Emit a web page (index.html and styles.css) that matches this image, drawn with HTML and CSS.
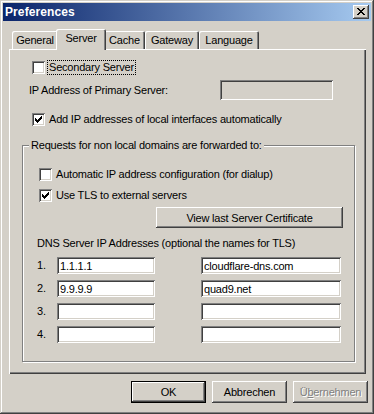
FILE: index.html
```html
<!DOCTYPE html>
<html>
<head>
<meta charset="utf-8">
<link rel="stylesheet" href="styles.css">
</head>
<body>
<div class="window">
  <div class="titlebar">
    <span class="title">Preferences</span>
    <span class="close">
      <svg width="8" height="7" viewBox="0 0 8 7" shape-rendering="crispEdges"><path d="M0 0h2v1h-2zM6 0h2v1h-2zM1 1h2v1h-2zM5 1h2v1h-2zM2 2h4v1h-4zM3 3h2v1h-2zM2 4h4v1h-4zM1 5h2v1h-2zM5 5h2v1h-2zM0 6h2v1h-2zM6 6h2v1h-2z" fill="#000"/></svg>
    </span>
  </div>
  <div class="tabs">
    <div class="tab t-general">General</div>
    <div class="tab active t-server">Server</div>
    <div class="tab t-cache">Cache</div>
    <div class="tab t-gateway">Gateway</div>
    <div class="tab t-language">Language</div>
  </div>
  <div class="panel">
    <label class="check row-secondary"><span class="cb"></span><span class="focus">Secondary Server</span></label>
    <div class="row-primary"><span class="primary-label">IP Address of Primary Server:</span><input class="field disabled primary-field" disabled></div>
    <label class="check row-add"><span class="cb"><svg width="7" height="7" viewBox="0 0 7 7" shape-rendering="crispEdges"><path d="M0 2h1v3h-1zM1 3h1v3h-1zM2 4h1v3h-1zM3 3h1v3h-1zM4 2h1v3h-1zM5 1h1v3h-1zM6 0h1v3h-1z" fill="#000"/></svg></span><span>Add IP addresses of local interfaces automatically</span></label>
    <fieldset class="group">
      <legend>Requests for non local domains are forwarded to:</legend>
      <label class="check g-auto"><span class="cb"></span><span>Automatic IP address configuration (for dialup)</span></label>
      <label class="check g-tls"><span class="cb"><svg width="7" height="7" viewBox="0 0 7 7" shape-rendering="crispEdges"><path d="M0 2h1v3h-1zM1 3h1v3h-1zM2 4h1v3h-1zM3 3h1v3h-1zM4 2h1v3h-1zM5 1h1v3h-1zM6 0h1v3h-1z" fill="#000"/></svg></span><span>Use TLS to external servers</span></label>
      <button class="btn cert">View last Server Certificate</button>
      <div class="dns-title">DNS Server IP Addresses (optional the names for TLS)</div>
      <div class="dns-grid">
        <span class="num">1.</span><input class="field ip" value="1.1.1.1"><input class="field host" value="cloudflare-dns.com">
        <span class="num">2.</span><input class="field ip" value="9.9.9.9"><input class="field host" value="quad9.net">
        <span class="num">3.</span><input class="field ip" value=""><input class="field host" value="">
        <span class="num">4.</span><input class="field ip" value=""><input class="field host" value="">
      </div>
    </fieldset>
  </div>
  <div class="actions">
    <button class="btn default">OK</button>
    <button class="btn">Abbrechen</button>
    <button class="btn disabled-btn" disabled>Ü<u>b</u>ernehmen</button>
  </div>
</div>
</body>
</html>
```
FILE: styles.css
```css
html, body {
  margin: 0;
  padding: 0;
  background: #d4d0c8;
}
body {
  font-family: "Liberation Sans", Arial, sans-serif;
  font-size: 11px;
  letter-spacing: -0.2px;
  color: #000;
}
.window {
  width: 374px;
  height: 414px;
  box-sizing: border-box;
  padding: 3px;
  background: #d4d0c8;
  box-shadow: inset -1px -1px #404040, inset 1px 1px #d4d0c8, inset -2px -2px #808080, inset 2px 2px #fff;
  display: flex;
  flex-direction: column;
}
.titlebar {
  height: 18px;
  background: linear-gradient(to right, #0a246a, #a6caf0);
  display: flex;
  align-items: center;
  justify-content: space-between;
  padding: 0 2px 0 2px;
}
.title {
  color: #fff;
  font-weight: bold;
  font-size: 12px;
  letter-spacing: 0.1px;
  line-height: 18px;
}
.close {
  width: 16px;
  height: 14px;
  box-sizing: border-box;
  background: #d4d0c8;
  box-shadow: inset -1px -1px #404040, inset 1px 1px #fff, inset -2px -2px #808080, inset 2px 2px #d4d0c8;
  display: flex;
  align-items: center;
  justify-content: center;
  padding: 0 1px 1px 0;
}
.close svg { display: block; }

.tabs {
  display: flex;
  align-items: flex-end;
  margin: 8px 0 0 9px;
  height: 20px;
}
.tab {
  height: 18px;
  box-sizing: border-box;
  text-align: center;
  line-height: 19px;
  border-radius: 2px 2px 0 0;
  box-shadow: inset 1px 1px #fff, inset -1px 0 #404040, inset -2px 0 #808080;
  background: #d4d0c8;
}
.tab.active {
  height: 21px;
  line-height: 19px;
  margin: 0 -2px -1px -2px;
  position: relative;
  z-index: 1;
}
.t-general { width: 46px; }
.t-server { width: 50px; }
.t-cache { width: 41px; }
.t-gateway { width: 54px; }
.t-language { width: 60px; }

.panel {
  margin: 0 5px 0 6px;
  height: 325px;
  box-sizing: border-box;
  padding-top: 12px;
  box-shadow: inset 1px 1px #fff, inset -1px -1px #404040, inset -2px -2px #808080;
  display: flex;
  flex-direction: column;
  align-items: flex-start;
}
.check {
  display: flex;
  align-items: center;
  height: 13px;
  line-height: 13px;
  gap: 4px;
}
.cb {
  width: 13px;
  height: 13px;
  box-sizing: border-box;
  background: #fff;
  box-shadow: inset 1px 1px #808080, inset -1px -1px #fff, inset 2px 2px #404040, inset -2px -2px #d4d0c8;
  display: flex;
  align-items: center;
  justify-content: center;
  flex: none;
}
.cb svg { display: block; }
.focus {
  outline: 1px dotted #000;
  outline-offset: 0;
  line-height: 13px;
  padding: 0 1px;
  margin-left: -1px;
}
.row-secondary { margin-left: 23px; }
.row-primary {
  display: flex;
  align-items: center;
  margin: 6px 0 0 20px;
  height: 20px;
}
.primary-label { width: 191px; }
.field {
  appearance: none;
  -webkit-appearance: none;
  border: 0;
  margin: 0;
  outline: none;
  font-family: "Liberation Sans", Arial, sans-serif;
  font-size: 11px;
  letter-spacing: -0.2px;
  color: #000;
  background: #fff;
  box-sizing: border-box;
  padding: 0 3px;
  box-shadow: inset 1px 1px #808080, inset -1px -1px #fff, inset 2px 2px #404040, inset -2px -2px #d4d0c8;
}
.field.disabled { background: #d4d0c8; }
.primary-field { width: 113px; height: 20px; }
.row-add { margin: 13px 0 0 23px; }

.group {
  margin: 13px 0 0 13px;
  width: 333px;
  box-sizing: border-box;
  padding: 0;
  border: 1px solid #808080;
  box-shadow: 1px 1px 0 #fff, inset 1px 1px 0 #fff;
  min-inline-size: 0;
  display: flex;
  flex-direction: column;
  align-items: flex-start;
  height: 223px;
}
.group legend {
  margin-left: 6px;
  padding: 0 2px;
  line-height: 13px;
  background: #d4d0c8;
}
.g-auto { margin: 16px 0 0 16px; }
.g-tls { margin: 8px 0 0 16px; }
.btn {
  font-family: "Liberation Sans", Arial, sans-serif;
  font-size: 11px;
  letter-spacing: -0.2px;
  color: #000;
  background: #d4d0c8;
  border: 0;
  margin: 0;
  padding: 0;
  box-sizing: border-box;
  box-shadow: inset -1px -1px #404040, inset 1px 1px #fff, inset -2px -2px #808080, inset 2px 2px #d4d0c8;
}
.cert {
  margin: 5px 0 0 133px;
  width: 187px;
  height: 21px;
}
.dns-title {
  margin: 9px 0 0 14px;
  line-height: 13px;
}
.dns-grid {
  margin: 7px 0 0 14px;
  display: grid;
  grid-template-columns: 20px 98px 186px;
  row-gap: 6px;
  align-items: center;
}
.dns-grid .field { height: 17px; width: 98px; }
.dns-grid .host { width: 140px; margin-left: 46px; }
.num { line-height: 13px; }

.actions {
  display: flex;
  justify-content: flex-end;
  gap: 6px;
  margin: 7px 3px 0 0;
}
.actions .btn {
  width: 75px;
  height: 22px;
}
.actions .btn.default {
  box-shadow: inset 0 0 0 1px #000, inset -2px -2px #404040, inset 2px 2px #fff, inset -3px -3px #808080;
}
.disabled-btn {
  color: #808080 !important;
  text-shadow: 1px 1px 0 #fff;
}
.disabled-btn u { text-decoration: underline; }
```
